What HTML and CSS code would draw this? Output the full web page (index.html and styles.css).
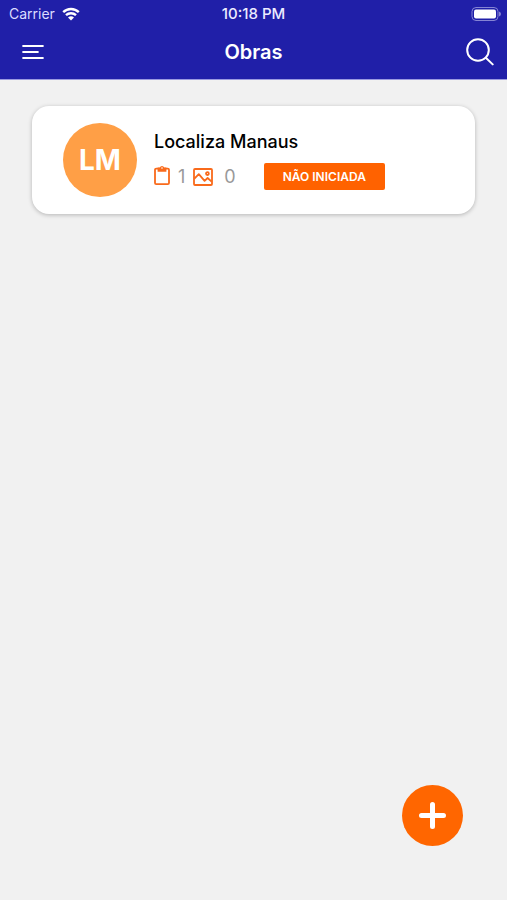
FILE: index.html
```
<!DOCTYPE html>
<html lang="pt-BR">
<head>
    <meta charset="UTF-8">
    <meta name="viewport" content="width=device-width, initial-scale=1.0">
    <title>Obras</title>
    <link rel="stylesheet" href="styles.css">
</head>
<body>
    <header class="header">
        <div class="status-bar">
            <div class="carrier">
                <span>Carrier</span>
                <svg class="wifi" viewBox="0 0 18 14" aria-hidden="true">
                    <path d="M1.2 5.2a11.2 11.2 0 0 1 15.6 0M4 8.2a7.2 7.2 0 0 1 10 0"/>
                    <path class="wifi-dot" d="M6 10.6a4.4 4.4 0 0 1 6 0L9 13.6z"/>
                </svg>
            </div>
            <span class="time">10:18 PM</span>
            <svg class="battery" viewBox="0 0 30 14" aria-hidden="true">
                <rect class="battery-case" x="1" y="0.5" width="26" height="13" rx="4"/>
                <rect class="battery-level" x="3" y="2.5" width="22" height="9" rx="2"/>
                <path class="battery-tip" d="M28 4.6q2 .8 2 2.4t-2 2.4z"/>
            </svg>
        </div>
        <nav class="nav-bar">
            <button class="icon-btn menu-btn" type="button" aria-label="Menu">
                <svg width="22" height="16" viewBox="0 0 22 16">
                    <path d="M1.2 2h19.6M1.2 8h14.6M1.2 14h19.6"/>
                </svg>
            </button>
            <h1 class="title">Obras</h1>
            <button class="icon-btn search-btn" type="button" aria-label="Buscar">
                <svg width="28" height="28" viewBox="0 0 28 28">
                    <circle cx="12" cy="12" r="10.8"/>
                    <path d="M19.8 19.8l6.9 6.6"/>
                </svg>
            </button>
        </nav>
    </header>

    <main class="list">
        <article class="card">
            <div class="avatar">LM</div>
            <div class="card-info">
                <h2 class="card-name">Localiza Manaus</h2>
                <div class="card-row">
                    <svg class="icon clipboard" width="16" height="24" viewBox="0 0 16 24" aria-hidden="true">
                        <rect x="1" y="3.6" width="14" height="15.6" rx="1.2"/>
                        <path class="clip" d="M3.6 2.6h2.2a2.3 2.3 0 0 1 4.4 0h2.2v4.2H3.6z"/>
                        <circle class="clip-hole" cx="8" cy="3" r=".8"/>
                    </svg>
                    <span class="count">1</span>
                    <svg class="icon picture" width="20" height="18" viewBox="0 0 20 18" aria-hidden="true">
                        <rect x="1" y="1" width="18" height="16" rx="1"/>
                        <path d="M1.4 10.6l4.4-4.4 5.8 6.6 3-2.8 4 3.6"/>
                        <circle cx="14.4" cy="5.6" r="1.4"/>
                    </svg>
                    <span class="count photos">0</span>
                    <span class="badge">NÃO INICIADA</span>
                </div>
            </div>
        </article>
    </main>

    <button class="add-btn" type="button" aria-label="Adicionar obra">
        <svg width="27" height="27" viewBox="0 0 27 27">
            <path d="M13.5 2.5v22M2.5 13.5h22"/>
        </svg>
    </button>
</body>
</html>
```
FILE: styles.css
```
*{
    box-sizing: border-box;
}
body {
    margin: 0;
    min-height: 100vh;
    background-color: #f1f1f1;
    font-family: Inter, "Liberation Sans", sans-serif;
}
h1, h2 {
    margin: 0;
}
button {
    padding: 0;
    border: none;
    cursor: pointer;
}
svg {
    display: block;
    fill: none;
}

/* header */
.header {
    background-color: #201fa8;
    color: white;
    border-bottom: 1px solid #9a9ae0;
}
.status-bar {
    display: grid;
    grid-template-columns: 1fr auto 1fr;
    align-items: center;
    height: 27px;
    padding: 0 6px;
    font-size: 14px;
}
.carrier {
    display: flex;
    align-items: center;
    gap: 7px;
    padding-left: 3px;
    color: #dcdcff;
}
.wifi {
    width: 18px;
    height: 14px;
    stroke: white;
    stroke-width: 2.4;
}
.wifi .wifi-dot {
    fill: white;
    stroke: none;
}
.time {
    font-size: 15px;
    font-weight: 500;
    color: #ececff;
}
.battery {
    width: 30px;
    height: 14px;
    justify-self: end;
}
.battery-case {
    stroke: #8584d4;
}
.battery-level {
    fill: white;
}
.battery-tip {
    fill: #8584d4;
}
.nav-bar {
    display: grid;
    grid-template-columns: 1fr auto 1fr;
    align-items: center;
    height: 52px;
    padding: 0 13px 2px;
}
.icon-btn {
    background: none;
    stroke: white;
    stroke-width: 2.2;
    stroke-linecap: round;
}
.menu-btn {
    justify-self: start;
    padding: 0 9px;
}
.search-btn {
    justify-self: end;
    stroke-width: 2;
}
.title {
    font-size: 20px;
    font-weight: 600;
    line-height: 28px;
}

/* cards */
.list {
    padding: 26px 32px;
}
.card {
    display: flex;
    align-items: center;
    gap: 17px;
    padding: 17px 31px;
    background-color: white;
    border-radius: 17px;
    box-shadow: 0 1px 4px rgba(0, 0, 0, 0.25);
}
.avatar {
    display: flex;
    flex: none;
    justify-content: center;
    align-items: center;
    width: 74px;
    height: 74px;
    border-radius: 50%;
    background-color: #ff9f46;
    color: white;
    font-size: 28px;
    font-weight: 700;
}
.card-name {
    font-size: 18px;
    font-weight: 500;
    line-height: 24px;
    color: black;
}
.card-row {
    display: flex;
    align-items: center;
    gap: 8px;
    margin-top: 9px;
}
.icon {
    stroke: #f96a1b;
    stroke-width: 1.8;
    stroke-linejoin: round;
}
.clipboard .clip {
    fill: #f96a1b;
    stroke: none;
}
.clipboard .clip-hole {
    fill: white;
    stroke: none;
}
.count {
    font-size: 18px;
    line-height: 27px;
    color: #999;
}
.photos {
    padding: 0 20px 0 3px;
}
.badge {
    padding: 0 19px;
    border-radius: 2px;
    background-color: #ff6200;
    color: white;
    font-size: 12px;
    font-weight: 600;
    line-height: 27px;
    white-space: nowrap;
}

/* floats over the list */
.add-btn {
    position: fixed;
    right: 44px;
    bottom: 54px;
    display: flex;
    justify-content: center;
    align-items: center;
    width: 61px;
    height: 61px;
    border-radius: 50%;
    background-color: #ff6600;
    stroke: white;
    stroke-width: 5;
    stroke-linecap: round;
}
```
